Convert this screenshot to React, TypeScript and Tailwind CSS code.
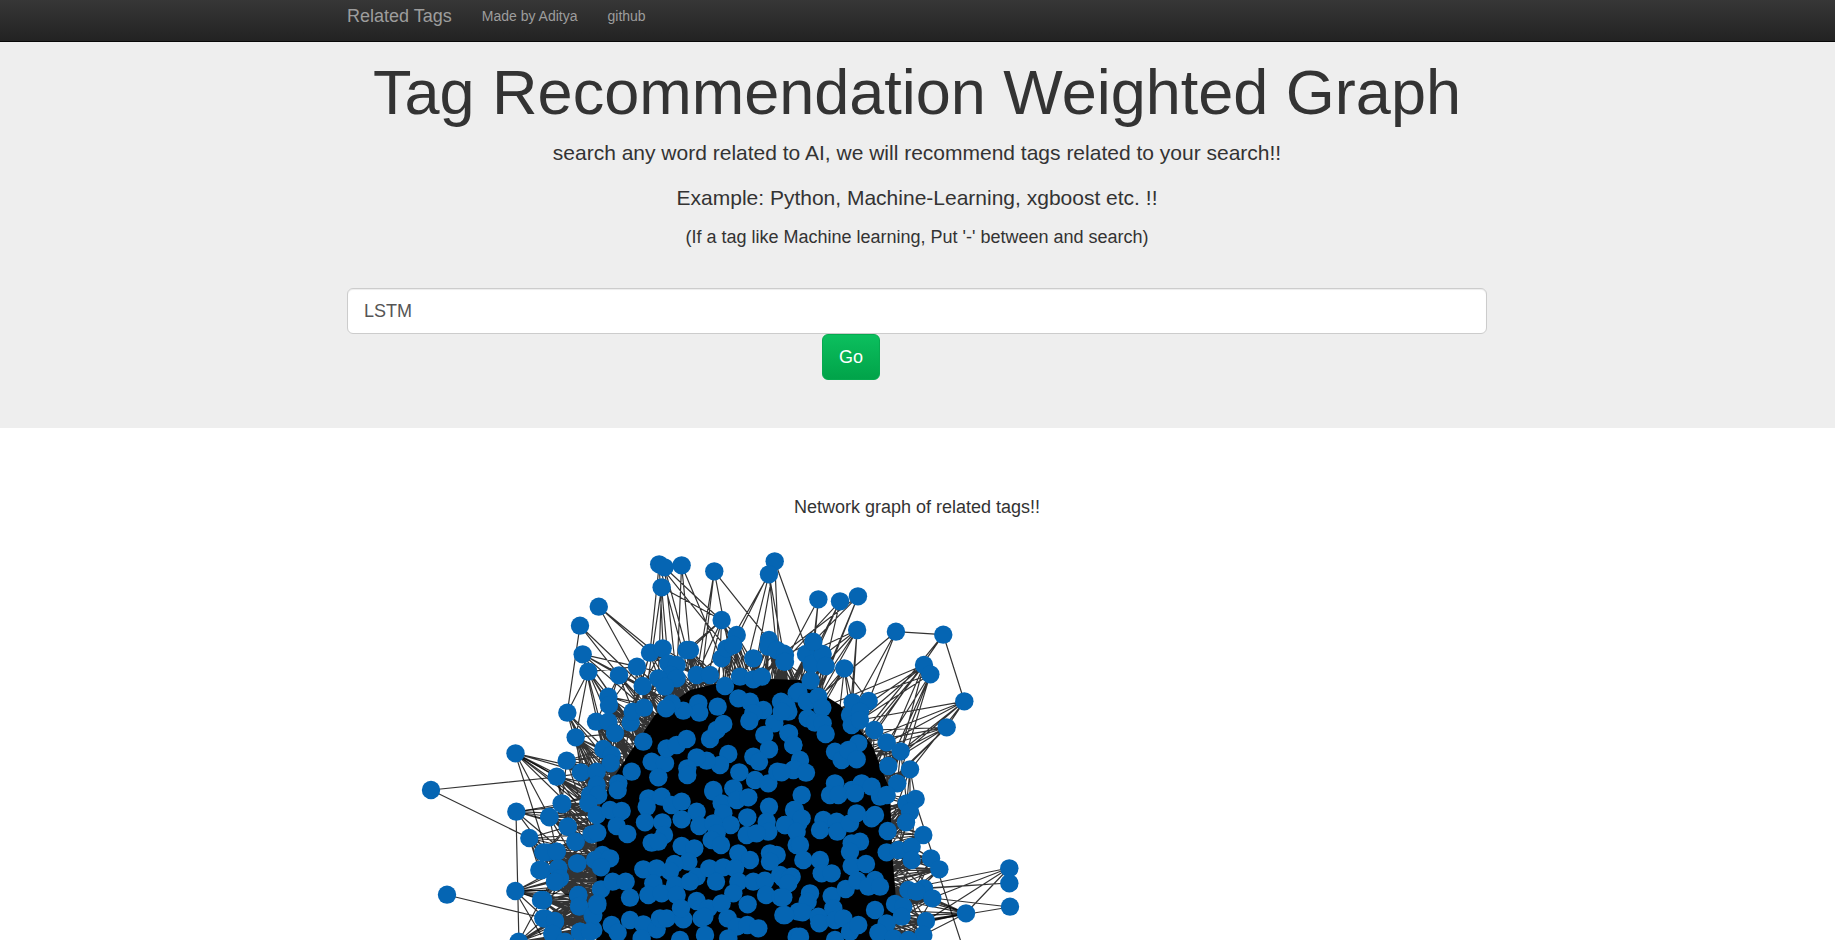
const groups: { x: number; y: number; sx: number; sy: number; pts: number[][] }[] = [
  // top spikes of the graph
  { x: 400, y: 540, sx: 2.45, sy: 3, pts: [[635,73],[648,82],[690,76],[770,94],[918,64],[904,103],[641,142],[487,200],[441,257],[1025,178],[1078,184],[1122,169],[1120,270],[1215,275],[1331,284],[788,240],[825,285],[904,300],[283,640]] },
  { x: 540, y: 640, sx: 3, sy: 3, pts: [[128,43],[145,95],[237,106],[291,80],[330,38],[368,25],[450,30],[440,30],[385,70],[410,75],[392,105],[355,115],[410,115],[375,140],[308,138],[470,105],[510,105],[555,138],[545,55],[560,25],[580,15],[600,110],[640,118],[665,110],[640,55],[685,20],[730,40],[733,65],[710,30],[595,175],[630,185],[670,210],[640,220],[628,243],[703,250],[723,185],[745,215],[770,160],[533,200],[475,190],[478,218],[430,212],[395,190],[378,205],[205,170],[207,195],[82,218],[168,245],[205,245],[225,280],[272,248],[278,215],[312,203],[107,292],[310,305],[190,327],[215,345],[212,370],[80,362],[123,397],[50,410],[170,395],[170,435],[235,430],[275,395],[335,365],[375,370],[355,412],[380,325],[410,315],[440,297],[510,297],[530,270],[550,252],[673,285],[687,328],[745,280],[760,315],[640,350],[657,365],[565,342],[540,375],[500,362],[470,352],[442,385],[442,405],[598,397],[645,420],[685,430],[712,395],[760,390],[520,450],[580,445]] },
  { x: 540, y: 790, sx: 3, sy: 3, pts: [[150,15],[175,15],[145,40],[233,0],[170,75],[210,60],[245,63],[65,40],[28,80],[83,110],[107,155],[155,133],[172,128],[230,108],[262,132],[187,195],[165,210],[210,205],[183,232],[112,220],[20,187],[50,185],[55,235],[55,268],[45,275],[5,240],[325,25],[365,20],[320,50],[395,45],[425,35],[470,65],[425,88],[315,97],[367,97],[372,135],[335,158],[355,155],[520,5],[545,40],[550,70],[590,30],[625,22],[687,50],[622,82],[572,105],[478,108],[520,100],[530,130],[515,150],[543,165],[680,95],[685,125],[620,135],[650,130],[735,105],[765,60],[775,100],[770,165],[425,168],[463,175],[445,215],[403,222],[390,243],[310,238],[350,235],[340,280],[325,315],[365,310],[405,285],[410,315],[470,260],[450,275],[508,235],[550,232],[528,275],[595,190],[630,210],[585,235],[595,275],[580,310],[640,275],[675,272],[690,190],[710,195],[690,215],[720,255],[755,260],[743,280],[678,315],[722,322],[183,298],[218,275],[257,275],[270,323],[115,315],[118,350],[172,340],[158,378],[10,330],[15,385],[45,395],[38,430],[120,425],[160,420],[215,405],[233,428],[270,390],[310,403],[350,418],[360,385],[380,385],[430,388],[423,355],[470,333],[505,355],[545,340],[485,385],[493,380],[563,385],[590,410],[622,405],[655,415],[623,343],[730,375],[775,365],[420,450],[495,435],[565,445],[305,445],[770,440]] },
  { x: 780, y: 640, sx: 3, sy: 3, pts: [[15,45],[15,65],[78,42],[95,72],[128,42],[137,78],[193,85],[100,5],[432,75],[451,103],[92,122],[55,155],[80,185],[115,170],[127,203],[218,187],[266,183],[553,184],[500,262],[20,200],[5,215],[83,235],[105,248],[128,250],[137,282],[210,225],[240,215],[215,255],[240,240],[283,270],[320,307],[362,334],[390,388],[325,378],[352,430],[27,280],[40,315],[60,360],[42,388],[78,398],[5,397],[235,310],[165,335],[185,360],[205,330],[230,358],[165,430],[215,450],[245,430],[275,440]] },
  { x: 780, y: 790, sx: 3, sy: 3, pts: [[65,15],[150,15],[175,15],[225,10],[300,20],[320,15],[380,40],[407,27],[390,65],[378,97],[42,60],[65,85],[15,105],[50,125],[60,165],[130,90],[120,120],[170,95],[172,125],[210,100],[230,70],[275,85],[285,75],[323,123],[430,135],[240,155],[215,160],[210,185],[70,210],[120,210],[125,250],[155,250],[215,228],[258,222],[320,187],[355,180],[395,170],[395,210],[453,205],[478,238],[688,235],[688,280],[690,350],[558,370],[432,295],[385,300],[410,305],[457,325],[438,393],[285,360],[345,342],[370,350],[365,380],[320,400],[10,265],[30,265],[25,280],[90,310],[83,335],[68,367],[15,375],[10,322],[155,318],[197,297],[232,272],[285,270],[265,290],[300,290],[160,355],[115,380],[118,400],[165,390],[190,385],[210,425],[235,405],[295,428],[340,445],[430,435],[60,440],[165,450],[385,450]] },
  { x: 420, y: 790, sx: 3, sy: 3, pts: [[33,0],[289,65],[427,42],[388,82],[444,110],[328,144],[466,155],[370,187],[410,185],[358,240],[472,220],[415,235],[420,265],[405,275],[286,303],[81,314],[363,330],[475,315],[477,348],[370,385],[405,393],[397,432],[296,455],[520,375],[532,345],[480,425],[510,425],[435,455]] },
];

const nodes = groups.flatMap((g) => g.pts.map(([px, py]) => [g.x + px / g.sx, g.y + py / g.sy]));

// seeded so the picture stays the same every load
function makeRand(seed: number) {
  let s = seed;
  return () => {
    s = (s * 1664525 + 1013904223) % 4294967296;
    return s / 4294967296;
  };
}

function buildEdges() {
  const rand = makeRand(7);
  const cx = 745;
  const cy = 900;
  const fromCenter = (n: number[]) => Math.hypot(n[0] - cx, n[1] - cy);
  let d = "";
  for (const n of nodes) {
    // far left and far right nodes get their lines from longEdges
    if (n[0] < 500 || n[0] > 1000) continue;
    const r = fromCenter(n);
    const ux = (cx - n[0]) / r;
    const uy = (cy - n[1]) / r;
    // prefer targets lying toward the middle, so lines run radially
    const inward = nodes
      .filter((m) => fromCenter(m) < r - 12)
      .map((m) => {
        const dist = Math.hypot(m[0] - n[0], m[1] - n[1]);
        const cos = ((m[0] - n[0]) * ux + (m[1] - n[1]) * uy) / dist;
        return [m[0], m[1], dist * (1 + 3 * (1 - cos))];
      })
      .sort((a, b) => a[2] - b[2])
      .slice(0, 26);
    const count = r > 300 ? 4 : r > 240 ? 8 : 20;
    for (let i = 0; i < count && inward.length > 0; i++) {
      const m = inward[Math.floor(rand() * inward.length)];
      d += `M${n[0].toFixed(1)} ${n[1].toFixed(1)}L${m[0].toFixed(1)} ${m[1].toFixed(1)}`;
    }
  }
  return d;
}

const edges = buildEdges();
const longEdges =
  "M918 810L962 945M516 812L519 945M447 895L543 918M431 790L529 838M431 790L557 777M515 753L557 777M515 753L575 800M515 753L546 850M1009 868L925 885M1009 868L932 898M1009 868L966 913M1009 868L926 921M1009 883L905 890M1009 883L924 888M1010 907L932 898M1010 907L926 921M966 913L926 921M966 913L915 895M516 812L562 804M516 812L553 817M515 891L549 890M515 891L541 900M515 891L578 895M515 891L541 935";

export default function App() {
  return (
    <div className="h-[940px] overflow-hidden bg-white font-['Liberation_Sans',Arial,sans-serif] text-[#333]">
      {/* Navbar */}
      <nav className="h-[42px] border-b border-[#080808] bg-gradient-to-b from-[#373737] to-[#222222]">
        <div className="ml-[347px] flex h-[33px] w-[1140px] items-center">
          <a href="#" className="text-[18px] text-[#9d9d9d]">Related Tags</a>
          <a href="#" className="ml-[30px] text-[14px] text-[#9d9d9d]">Made by Aditya</a>
          <a href="#" className="ml-[30px] text-[14px] text-[#9d9d9d]">github</a>
        </div>
      </nav>

      {/* Search panel */}
      <section className="h-[385.5px] bg-[#eeeeee] pt-[16px]">
        <div className="ml-[347px] w-[1140px] text-center">
          <h1 className="text-[63px] leading-[69px]">Tag Recommendation Weighted Graph</h1>
          <p className="mt-[11px] text-[21px] leading-[30px]">search any word related to AI, we will recommend tags related to your search!!</p>
          <p className="mt-[15px] text-[21px] leading-[30px]">Example: Python, Machine-Learning, xgboost etc. !!</p>
          <p className="mt-[11px] text-[18px] leading-[26px]">(If a tag like Machine learning, Put '-' between and search)</p>
          <input
            defaultValue="LSTM"
            className="mt-[38px] block h-[46px] w-full rounded-[6px] border border-[#cccccc] bg-white px-4 text-[18px] text-[#555555] shadow-[inset_0_1px_1px_rgba(0,0,0,0.075)] outline-none"
          />
          <div className="flex">
            <button className="ml-[475px] h-[46px] w-[58px] rounded-[6px] border border-[#07a950] bg-gradient-to-b from-[#0cbf5e] to-[#01a349] text-[18px] text-white">
              Go
            </button>
          </div>
        </div>
      </section>

      {/* Graph */}
      <section>
        <p className="pr-px pt-[66px] text-center text-[18px] leading-[26px]">Network graph of related tags!!</p>
        <svg viewBox="400 540 640 400" className="ml-[400px] mt-[20.5px] h-[400px] w-[640px]">
          <polygon
            points="690,690 740,678 800,680 840,705 872,745 890,790 892,850 896,900 892,945 596,945 598,900 596,870 598,810 612,780 635,745 655,715"
            fill="#000"
          />
          <path d={edges} stroke="#000" strokeOpacity="0.8" strokeWidth="1.2" fill="none" />
          <path d={longEdges} stroke="#000" strokeOpacity="0.8" strokeWidth="1.2" fill="none" />
          {nodes.map((n, i) => (
            <circle key={i} cx={n[0]} cy={n[1]} r="9.2" fill="#0565b3" />
          ))}
        </svg>
      </section>
    </div>
  );
}
